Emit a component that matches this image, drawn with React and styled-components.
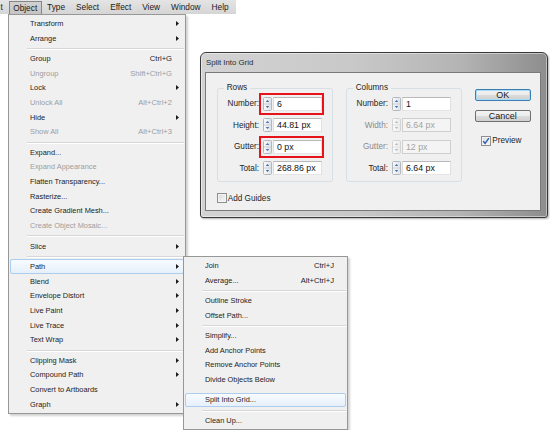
import React from 'react';
import styled, { createGlobalStyle, css } from 'styled-components';

const Global = createGlobalStyle`
  html, body { margin: 0; padding: 0; background: #fff; }
  body { font-family: "Liberation Sans", Arial, sans-serif; }
  * { box-sizing: border-box; }
`;

const Stage = styled.div`
  position: relative;
  width: 550px;
  height: 430px;
  overflow: hidden;
  background: #fff;
`;

/* ---------- menu bar ---------- */
const MenuBar = styled.div`
  display: flex;
  align-items: stretch;
  width: 236px;
  height: 14px;
  background: linear-gradient(#e4e4e4, #d5d5d5);
  font-size: 8.3px;
  color: #1a1a1a;
`;

const MenuTitle = styled.div`
  display: flex;
  align-items: center;
  padding: 0 5.5px;
  white-space: nowrap;
  ${p => p.$edge && css`padding: 0 6px 0 0.5px;`}
  ${p => p.$active && css`
    margin-top: 1px;
    padding: 0 3.4px;
    background: linear-gradient(#d2d2d2, #c4c4c4);
    border: 1px solid #858585;
    border-bottom: none;
  `}
`;

/* ---------- menus ---------- */
const MenuPanel = styled.div`
  position: absolute;
  left: ${p => p.$x}px;
  top: ${p => p.$y}px;
  width: ${p => p.$w}px;
  padding: 1px;
  background: #f0f0f0;
  border: 1px solid #979797;
  box-shadow: 2px 2px 2px rgba(0, 0, 0, 0.18);
  font-size: 7.4px;
  color: #1c1c1c;
`;

const Item = styled.div`
  display: flex;
  align-items: center;
  height: 14.7px;
  padding-left: 19px;
  border: 1px solid transparent;
  border-radius: 2px;
  white-space: nowrap;
  color: ${p => (p.$disabled ? '#9d9d9d' : '#1c1c1c')};
  ${p => p.$hot && css`
    border-color: #aecdec;
    background: linear-gradient(#f7fbfe, #e6f0fb);
  `}
`;

const ItemLabel = styled.span`
  flex: 1;
`;

const Shortcut = styled.span`
  font-size: 7.6px;
`;

const ArrowCell = styled.span`
  display: flex;
  align-items: center;
  width: 11px;
  height: 100%;
  padding-left: 3.5px;
`;

const Separator = styled.div`
  height: 5.7px;
  display: flex;
  align-items: center;
  margin-left: 17px;
  &::before {
    content: '';
    flex: 1;
    height: 1px;
    background: ${p => (p.$blank ? 'transparent' : '#d7d7d7')};
    box-shadow: ${p => (p.$blank ? 'none' : '0 1px 0 #fff')};
  }
`;

const SubArrow = () => (
  <svg width="3" height="5" viewBox="0 0 3 5">
    <polygon points="0,0 3,2.5 0,5" fill="#1c1c1c" />
  </svg>
);

const Menu = ({ items, ...rest }) => (
  <MenuPanel {...rest}>
    {items.map((it, i) =>
      it === 'sep' || it === 'gap' ? (
        <Separator key={i} $blank={it === 'gap'} />
      ) : (
        <Item key={i} $disabled={it.d} $hot={it.h}>
          <ItemLabel>{it.l}</ItemLabel>
          {it.k && <Shortcut>{it.k}</Shortcut>}
          <ArrowCell>{it.sub && <SubArrow />}</ArrowCell>
        </Item>
      )
    )}
  </MenuPanel>
);

const mainItems = [
  { l: 'Transform', sub: true },
  { l: 'Arrange', sub: true },
  'sep',
  { l: 'Group', k: 'Ctrl+G' },
  { l: 'Ungroup', k: 'Shift+Ctrl+G', d: true },
  { l: 'Lock', sub: true },
  { l: 'Unlock All', k: 'Alt+Ctrl+2', d: true },
  { l: 'Hide', sub: true },
  { l: 'Show All', k: 'Alt+Ctrl+3', d: true },
  'sep',
  { l: 'Expand...' },
  { l: 'Expand Appearance', d: true },
  { l: 'Flatten Transparency...' },
  { l: 'Rasterize...' },
  { l: 'Create Gradient Mesh...' },
  { l: 'Create Object Mosaic...', d: true },
  'sep',
  { l: 'Slice', sub: true },
  'sep',
  { l: 'Path', sub: true, h: true },
  { l: 'Blend', sub: true },
  { l: 'Envelope Distort', sub: true },
  { l: 'Live Paint', sub: true },
  { l: 'Live Trace', sub: true },
  { l: 'Text Wrap', sub: true },
  'sep',
  { l: 'Clipping Mask', sub: true },
  { l: 'Compound Path', sub: true },
  { l: 'Convert to Artboards' },
  { l: 'Graph', sub: true },
];

const pathItems = [
  { l: 'Join', k: 'Ctrl+J' },
  { l: 'Average...', k: 'Alt+Ctrl+J' },
  'sep',
  { l: 'Outline Stroke' },
  { l: 'Offset Path...' },
  'sep',
  { l: 'Simplify...' },
  { l: 'Add Anchor Points' },
  { l: 'Remove Anchor Points' },
  { l: 'Divide Objects Below' },
  'gap',
  { l: 'Split Into Grid...', h: true },
  'sep',
  { l: 'Clean Up...' },
];

/* ---------- dialog ---------- */
const Dialog = styled.div`
  position: absolute;
  left: 200px;
  top: 52px;
  width: 348px;
  height: 166px;
  display: flex;
  flex-direction: column;
  padding: 0 6px 6px 4px;
  border: 1px solid #3a3a3a;
  border-radius: 6px 6px 3px 3px;
  background: linear-gradient(to right, #d3d3d3 0%, #c8c8c8 45%, #b4b4b4 75%, #8d8d8d 100%);
  box-shadow: inset 0 0 0 1px rgba(255, 255, 255, 0.45), 1px 1px 2px rgba(0, 0, 0, 0.3);
`;

const TitleBar = styled.div`
  height: 19px;
  display: flex;
  align-items: center;
  padding-left: 1px;
  font-size: 7.8px;
  color: #2a2a2a;
`;

const Body = styled.div`
  flex: 1;
  display: flex;
  flex-direction: column;
  padding: 10px 0 0 10.7px;
  background: #f0f0f0;
  border: 1px solid #7a7a7a;
`;

const TopRow = styled.div`
  display: flex;
  align-items: flex-start;
`;

const Group = styled.fieldset`
  width: 116.6px;
  margin: 0 12.4px 0 0;
  padding: 0 0 2px 0;
  min-width: 0;
  border: 1px solid #d5dfe5;
  border-radius: 3px;
`;

const Legend = styled.legend`
  margin-left: 6px;
  padding: 0 3px;
  font-size: 8.2px;
  line-height: 10px;
  color: #1e1e1e;
`;

const FieldRow = styled.div`
  display: flex;
  align-items: center;
  height: 21.5px;
`;

const FieldLabel = styled.span`
  width: 41.3px;
  margin-right: 4px;
  text-align: right;
  font-size: 8.2px;
  color: ${p => (p.$disabled ? '#8a8a8a' : '#1e1e1e')};
  white-space: nowrap;
`;

const InputGroup = styled.div`
  display: flex;
  align-items: center;
  ${p => p.$marked && css`
    margin: -4px -2px -4px -4px;
    padding: 2px 0 2px 2px;
    border: 2px solid #e8121a;
  `}
`;

const SpinBox = styled.div`
  display: flex;
  width: 9px;
  height: 14px;
  margin-right: 1px;
`;

const Field = styled.div`
  width: 49.5px;
  height: 14px;
  display: flex;
  align-items: center;
  padding-left: 3px;
  font-size: 8.8px;
  white-space: nowrap;
  border: 1px solid;
  ${p => p.$disabled
    ? css`
        color: #a3a3a3;
        background: #f4f4f4;
        border-color: #cfcfcf;
      `
    : css`
        color: #111;
        background: #fff;
        border-color: #b9b9b9 #e0e0e0 #e5e5e5 #dcdcdc;
      `}
`;

const Spinner = ({ disabled }) => {
  const c = disabled ? '#bdbdbd' : '#4f72a6';
  return (
    <SpinBox>
      <svg width="9" height="14" viewBox="0 0 9 14">
        <defs>
          <linearGradient id={disabled ? 'sgd' : 'sg'} x1="0" y1="0" x2="1" y2="0">
            <stop offset="0" stopColor="#fafafa" />
            <stop offset="1" stopColor={disabled ? '#ececec' : '#dde3ea'} />
          </linearGradient>
        </defs>
        <rect x="0.5" y="0.5" width="8" height="13" rx="1" fill={`url(#${disabled ? 'sgd' : 'sg'})`} stroke={disabled ? '#d4d4d4' : '#b3b8bf'} />
        <line x1="1" y1="7" x2="8" y2="7" stroke={disabled ? '#e0e0e0' : '#c9ced6'} />
        <polygon points="2.6,5 4.5,3 6.4,5" fill={c} />
        <polygon points="2.6,9 4.5,11 6.4,9" fill={c} />
      </svg>
    </SpinBox>
  );
};

const Input = ({ label, value, disabled, marked }) => (
  <FieldRow>
    <FieldLabel $disabled={disabled}>{label}</FieldLabel>
    <InputGroup $marked={marked}>
      <Spinner disabled={disabled} />
      <Field $disabled={disabled}>{value}</Field>
    </InputGroup>
  </FieldRow>
);

const ButtonCol = styled.div`
  display: flex;
  flex-direction: column;
  margin-top: 6px;
`;

const Button = styled.div`
  width: 56px;
  height: 12px;
  margin-bottom: 9px;
  display: flex;
  align-items: center;
  justify-content: center;
  font-size: 9px;
  color: #1a1a1a;
  border: 1px solid #707070;
  border-radius: 2px;
  background: linear-gradient(#f3f3f3 0%, #ebebeb 50%, #dcdcdc 51%, #cfcfcf 100%);
  ${p => p.$default && css`
    border-color: #3c7fb1;
    box-shadow: inset 0 0 0 1px #a7dcf8;
  `}
`;

const CheckRow = styled.div`
  display: flex;
  align-items: center;
  height: 10px;
  gap: 1px;
  font-size: 8.2px;
  color: #1e1e1e;
  ${p => p.$pad && css`padding-left: 6.7px; margin-top: 4.5px;`}
  ${p => p.$top && css`margin-top: 11px;`}
`;

const CheckBox = styled.span`
  display: flex;
  align-items: center;
  justify-content: center;
  width: 10px;
  height: 10px;
  border: 1px solid #8f8f8f;
  background: linear-gradient(135deg, #dcdcdc, #f6f6f6);
  box-shadow: inset 0 0 0 1px #f4f4f4;
`;

const Check = ({ checked }) => (
  <CheckBox>
    {checked && (
      <svg width="8" height="8" viewBox="0 0 8 8">
        <path d="M1.2 4.2 L3.1 6.3 L6.9 1.2" fill="none" stroke="#2a5db0" strokeWidth="1.4" />
      </svg>
    )}
  </CheckBox>
);

export default function App() {
  return (
    <Stage>
      <Global />
      <MenuBar>
        <MenuTitle $edge>t</MenuTitle>
        <MenuTitle $active>Object</MenuTitle>
        <MenuTitle>Type</MenuTitle>
        <MenuTitle>Select</MenuTitle>
        <MenuTitle>Effect</MenuTitle>
        <MenuTitle>View</MenuTitle>
        <MenuTitle>Window</MenuTitle>
        <MenuTitle>Help</MenuTitle>
      </MenuBar>

      <Menu items={mainItems} $x={8} $y={14} $w={178} />
      <Menu items={pathItems} $x={183} $y={256} $w={165} />

      <Dialog>
        <TitleBar>Split Into Grid</TitleBar>
        <Body>
          <TopRow>
            <Group>
              <Legend>Rows</Legend>
              <Input label="Number:" value="6" marked />
              <Input label="Height:" value="44.81 px" />
              <Input label="Gutter:" value="0 px" marked />
              <Input label="Total:" value="268.86 px" />
            </Group>
            <Group>
              <Legend>Columns</Legend>
              <Input label="Number:" value="1" />
              <Input label="Width:" value="6.64 px" disabled />
              <Input label="Gutter:" value="12 px" disabled />
              <Input label="Total:" value="6.64 px" />
            </Group>
            <ButtonCol>
              <Button $default>OK</Button>
              <Button>Cancel</Button>
              <CheckRow $pad>
                <Check checked />
                <span>Preview</span>
              </CheckRow>
            </ButtonCol>
          </TopRow>
          <CheckRow $top>
            <Check />
            <span>Add Guides</span>
          </CheckRow>
        </Body>
      </Dialog>
    </Stage>
  );
}
